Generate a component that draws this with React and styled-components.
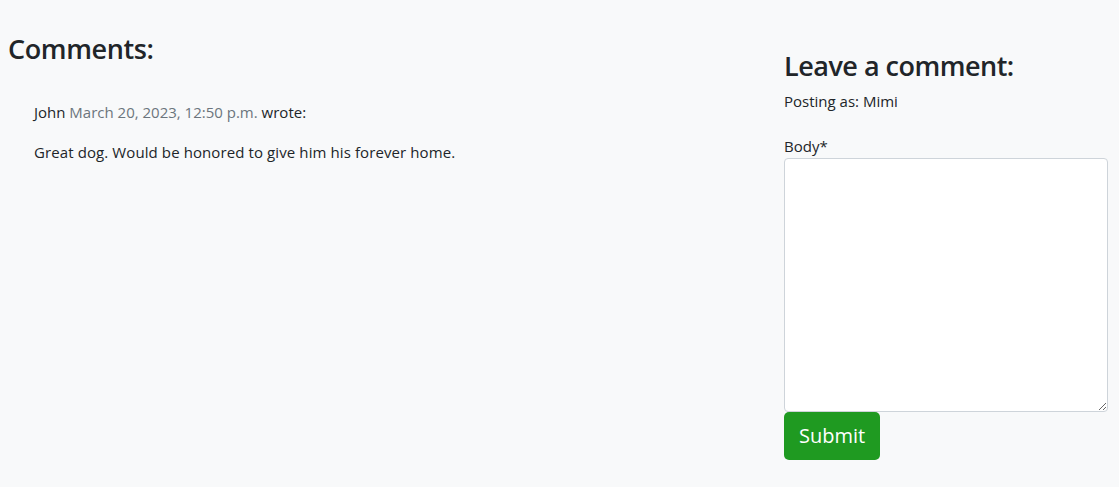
import React from "react";
import styled, { createGlobalStyle } from "styled-components";

const Global = createGlobalStyle`
  html, body { margin: 0; padding: 0; }
  body {
    background: #f8f9fa;
    color: #212529;
    font-family: "Open Sans", "Noto Sans", sans-serif;
    font-size: 15px;
    line-height: 1.5;
  }
  * { box-sizing: border-box; }
`;

const Page = styled.div`
  display: flex;
  width: 1119px;
  min-height: 487px;
`;

const Left = styled.section`
  flex: 0 0 784px;
  padding: 33px 0 0 8px;
`;

const Right = styled.section`
  flex: 1;
  padding: 50px 11px 0 0;
`;

const Heading = styled.h3`
  margin: 0;
  font-size: 27px;
  font-weight: 600;
  line-height: 1.2;
  letter-spacing: ${(p) => (p.$tight ? "-0.5px" : "-0.4px")};
`;

const Comment = styled.div`
  padding: 36px 0 0 26px;
`;

const Meta = styled.p`
  margin: 0 0 17px;
  font-size: 15px;
`;

const Muted = styled.span`
  color: #6c757d;
`;

const Text = styled.p`
  margin: 0;
  font-size: 15px;
  letter-spacing: 0.1px;
`;

const Posting = styled.p`
  margin: 8px 0 22px;
  font-size: 15px;
`;

const Label = styled.label`
  display: block;
  font-size: 15px;
  line-height: 23px;
`;

const TextArea = styled.textarea`
  display: block;
  width: 100%;
  height: 254px;
  border: 1px solid #ced4da;
  border-radius: 4px;
  background: #fff;
  resize: vertical;
  font: inherit;
  padding: 6px 12px;
`;

const Button = styled.button`
  display: block;
  margin-top: 0;
  background: #1f9a21;
  color: #fff;
  border: none;
  border-radius: 5px;
  font-family: inherit;
  font-size: 20px;
  height: 48px;
  padding: 0 15px;
  cursor: pointer;
`;

export default function App() {
  return (
    <>
      <Global />
      <Page>
        <Left>
          <Heading>Comments:</Heading>
          <Comment>
            <Meta>
              John <Muted>March 20, 2023, 12:50 p.m.</Muted> wrote:
            </Meta>
            <Text>Great dog. Would be honored to give him his forever home.</Text>
          </Comment>
        </Left>
        <Right>
          <Heading $tight>Leave a comment:</Heading>
          <Posting>Posting as: Mimi</Posting>
          <Label htmlFor="body">Body*</Label>
          <TextArea id="body" />
          <Button>Submit</Button>
        </Right>
      </Page>
    </>
  );
}
